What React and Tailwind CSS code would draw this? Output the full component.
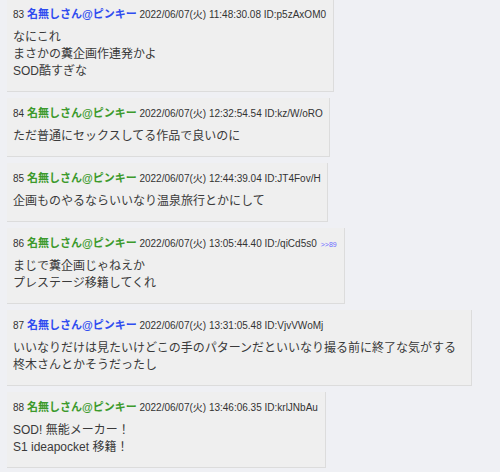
import React from "react";

const posts = [
  { no: 83, blue: true, date: "2022/06/07(火) 11:48:30.08", id: "ID:p5zAxOM0", w: "w-[327px]", lines: ["なにこれ", "まさかの糞企画作連発かよ", "SOD酷すぎな"] },
  { no: 84, blue: false, date: "2022/06/07(火) 12:32:54.54", id: "ID:kz/W/oRO", w: "w-[323px]", lines: ["ただ普通にセックスしてる作品で良いのに"] },
  { no: 85, blue: false, date: "2022/06/07(火) 12:44:39.04", id: "ID:JT4Fov/H", w: "w-[321px]", lines: ["企画ものやるならいいなり温泉旅行とかにして"] },
  { no: 86, blue: false, date: "2022/06/07(火) 13:05:44.40", id: "ID:/qiCd5s0", w: "w-[338px]", ref: ">>89", lines: ["まじで糞企画じゃねえか", "プレステージ移籍してくれ"] },
  { no: 87, blue: true, date: "2022/06/07(火) 13:31:05.48", id: "ID:VjvVWoMj", w: "w-[465px]", lines: ["いいなりだけは見たいけどこの手のパターンだといいなり撮る前に終了な気がする", "柊木さんとかそうだったし"] },
  { no: 88, blue: false, date: "2022/06/07(火) 13:46:06.35", id: "ID:krlJNbAu", w: "w-[319px]", lines: ["SOD! 無能メーカー！", "S1 ideapocket 移籍！"] },
];

export default function App() {
  return (
    <div
      className="w-[500px] h-[472px] overflow-hidden bg-[#eff0f4]"
      style={{ fontFamily: "'Liberation Sans', 'Noto Sans CJK JP', sans-serif" }}
    >
      <div className="flex flex-col items-start gap-[6px] mt-[-1px] pl-[7px]">
        {posts.map((p) => (
          <div
            key={p.no}
            className={`${p.w} bg-[#efefef] border-r border-b border-[#dcdcdc] pl-[6px] pr-[4px] pt-[6px] pb-[11px] text-[#3a3a3a] whitespace-nowrap`}
          >
            <div className="h-[18px] leading-[18px] text-[10px] text-[#333333]">
              <span>{p.no} </span>
              <span className={`text-[11px] font-bold ${p.blue ? "text-[#2f4cf0]" : "text-[#3c9a2c]"}`}>名無しさん@ピンキー</span>
              <span> {p.date} {p.id}</span>
              {p.ref && <span className="ml-[4px] text-[7px] text-[#6b6bff]">{p.ref}</span>}
            </div>
            <div className="mt-[6px] text-[12px] leading-[17px]">
              {p.lines.map((l, i) => (
                <div key={i}>{l}</div>
              ))}
            </div>
          </div>
        ))}
      </div>
    </div>
  );
}
